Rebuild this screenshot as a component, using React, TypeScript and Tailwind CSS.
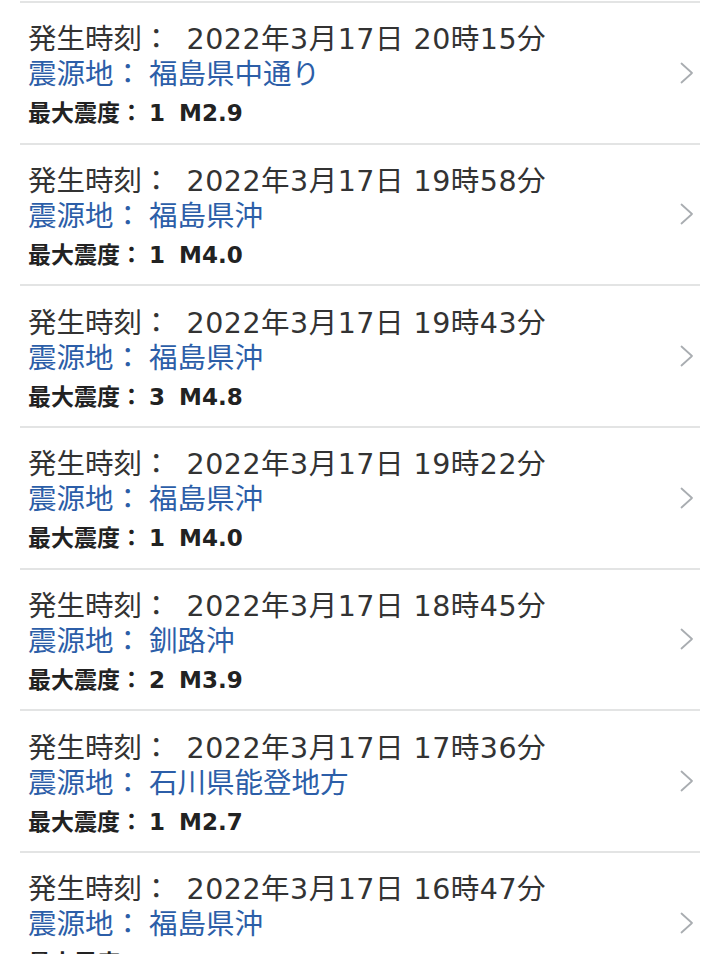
type Quake = {
  time: string;
  place: string;
  intensity: string;
  mag: string;
};

const quakes: Quake[] = [
  { time: '2022年3月17日 20時15分', place: '福島県中通り', intensity: '1', mag: 'M2.9' },
  { time: '2022年3月17日 19時58分', place: '福島県沖', intensity: '1', mag: 'M4.0' },
  { time: '2022年3月17日 19時43分', place: '福島県沖', intensity: '3', mag: 'M4.8' },
  { time: '2022年3月17日 19時22分', place: '福島県沖', intensity: '1', mag: 'M4.0' },
  { time: '2022年3月17日 18時45分', place: '釧路沖', intensity: '2', mag: 'M3.9' },
  { time: '2022年3月17日 17時36分', place: '石川県能登地方', intensity: '1', mag: 'M2.7' },
  { time: '2022年3月17日 16時47分', place: '福島県沖', intensity: '1', mag: 'M4.1' },
];

function Chevron() {
  return (
    <svg width="14" height="22" viewBox="0 0 14 22" fill="none" className="shrink-0">
      <polyline
        points="1.5,1.5 12,11 1.5,20.5"
        stroke="#a9adb1"
        strokeWidth="1.8"
        strokeLinecap="round"
        strokeLinejoin="round"
      />
    </svg>
  );
}

function QuakeRow({ q }: { q: Quake }) {
  return (
    <li className="flex h-[141.67px] items-center border-b-2 border-[#e3e4e4] pl-2 pr-[6px]">
      <div className="flex-1 pt-[5px]">
        <p className="whitespace-nowrap text-[28.5px] leading-[36px] text-[#333333]">
          発生時刻：<span className="ml-[16px] tracking-[0.5px]">{q.time}</span>
        </p>
        <p className="whitespace-nowrap text-[28.5px] leading-[34px] text-[#2c5ea8]">
          震源地：<span className="ml-[7px]">{q.place}</span>
        </p>
        <p className="mt-[6px] whitespace-nowrap text-[23px] font-bold leading-[30px] text-[#222222]">
          最大震度：<span className="ml-[6px]">{q.intensity}</span>
          <span className="ml-[14px]">{q.mag}</span>
        </p>
      </div>
      <Chevron />
    </li>
  );
}

export default function App() {
  return (
    <div
      className="h-[954px] overflow-hidden bg-white px-5"
      style={{ fontFamily: "'DejaVu Sans', 'Noto Sans CJK JP', sans-serif" }}
    >
      <ul className="mt-[1px] border-t-2 border-[#e3e4e4]">
        {quakes.map((q, i) => (
          <QuakeRow key={i} q={q} />
        ))}
      </ul>
    </div>
  );
}
